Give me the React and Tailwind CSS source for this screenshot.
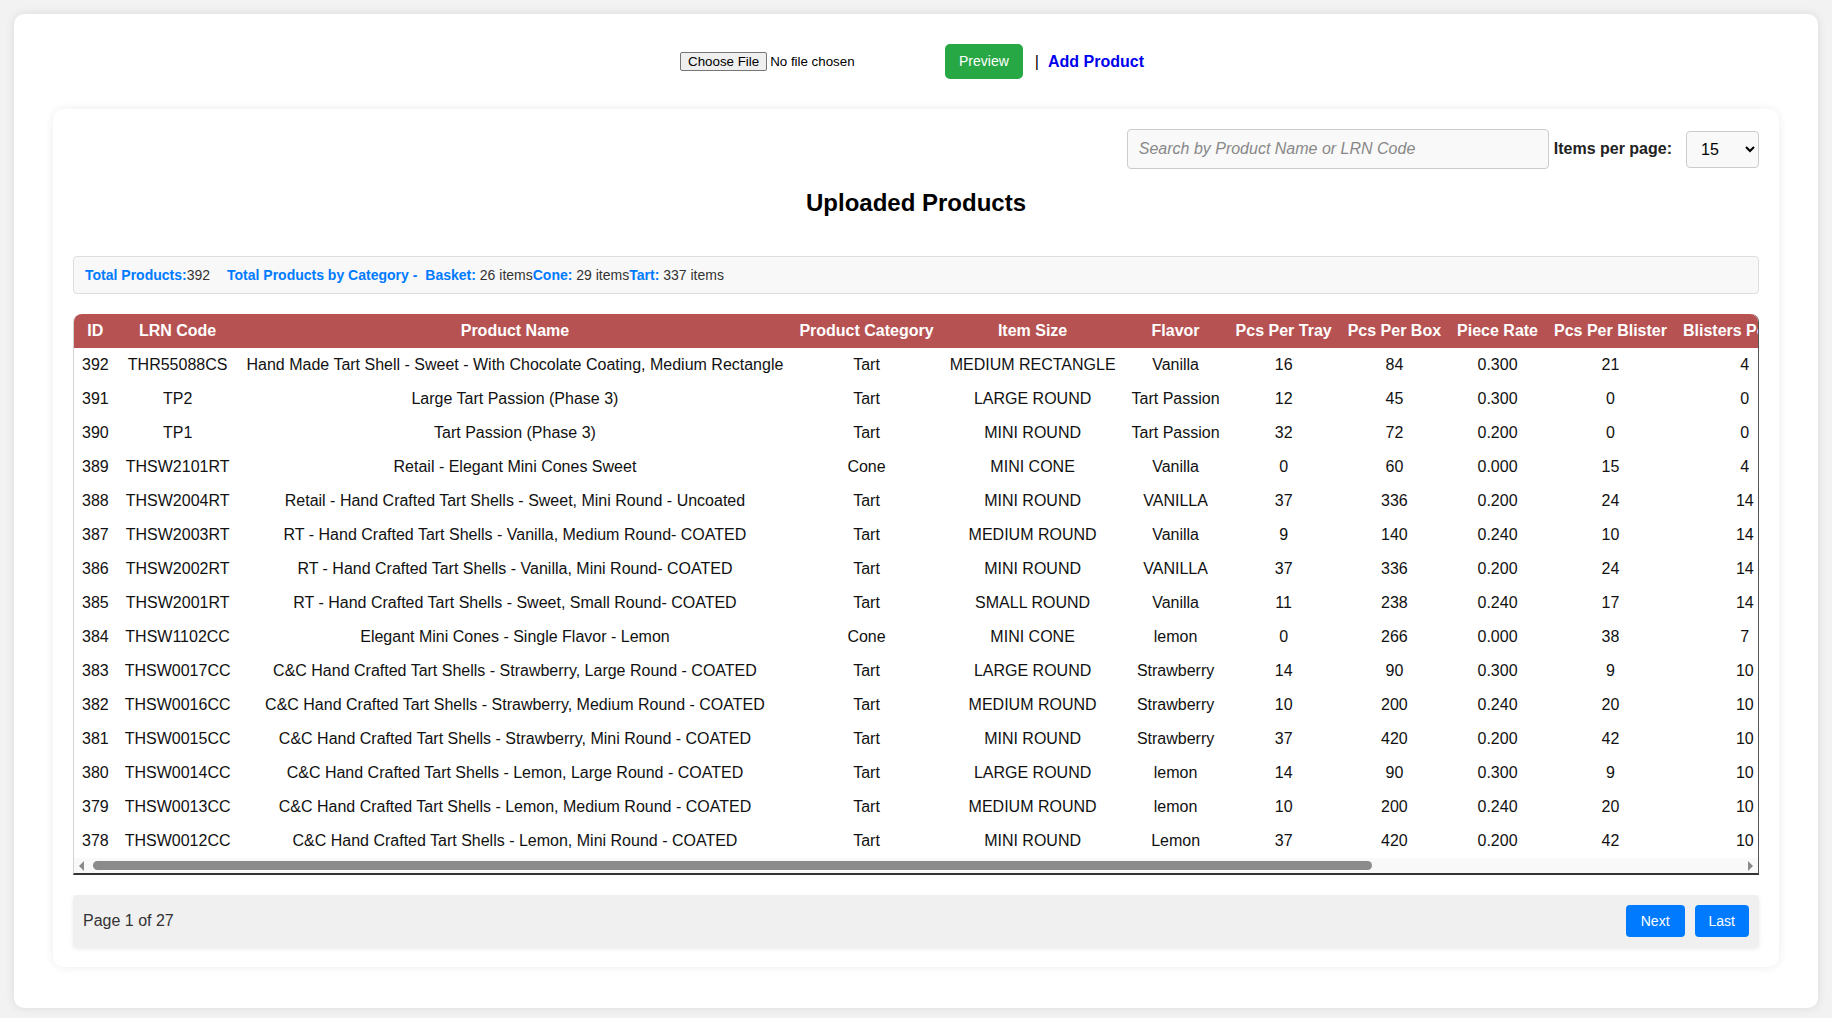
import React, { useState } from "react";

const products = [
  [392, "THR55088CS", "Hand Made Tart Shell - Sweet - With Chocolate Coating, Medium Rectangle", "Tart", "MEDIUM RECTANGLE", "Vanilla", 16, 84, "0.300", 21, 4],
  [391, "TP2", "Large Tart Passion (Phase 3)", "Tart", "LARGE ROUND", "Tart Passion", 12, 45, "0.300", 0, 0],
  [390, "TP1", "Tart Passion (Phase 3)", "Tart", "MINI ROUND", "Tart Passion", 32, 72, "0.200", 0, 0],
  [389, "THSW2101RT", "Retail - Elegant Mini Cones Sweet", "Cone", "MINI CONE", "Vanilla", 0, 60, "0.000", 15, 4],
  [388, "THSW2004RT", "Retail - Hand Crafted Tart Shells - Sweet, Mini Round - Uncoated", "Tart", "MINI ROUND", "VANILLA", 37, 336, "0.200", 24, 14],
  [387, "THSW2003RT", "RT - Hand Crafted Tart Shells - Vanilla, Medium Round- COATED", "Tart", "MEDIUM ROUND", "Vanilla", 9, 140, "0.240", 10, 14],
  [386, "THSW2002RT", "RT - Hand Crafted Tart Shells - Vanilla, Mini Round- COATED", "Tart", "MINI ROUND", "VANILLA", 37, 336, "0.200", 24, 14],
  [385, "THSW2001RT", "RT - Hand Crafted Tart Shells - Sweet, Small Round- COATED", "Tart", "SMALL ROUND", "Vanilla", 11, 238, "0.240", 17, 14],
  [384, "THSW1102CC", "Elegant Mini Cones - Single Flavor - Lemon", "Cone", "MINI CONE", "lemon", 0, 266, "0.000", 38, 7],
  [383, "THSW0017CC", "C&C Hand Crafted Tart Shells - Strawberry, Large Round - COATED", "Tart", "LARGE ROUND", "Strawberry", 14, 90, "0.300", 9, 10],
  [382, "THSW0016CC", "C&C Hand Crafted Tart Shells - Strawberry, Medium Round - COATED", "Tart", "MEDIUM ROUND", "Strawberry", 10, 200, "0.240", 20, 10],
  [381, "THSW0015CC", "C&C Hand Crafted Tart Shells - Strawberry, Mini Round - COATED", "Tart", "MINI ROUND", "Strawberry", 37, 420, "0.200", 42, 10],
  [380, "THSW0014CC", "C&C Hand Crafted Tart Shells - Lemon, Large Round - COATED", "Tart", "LARGE ROUND", "lemon", 14, 90, "0.300", 9, 10],
  [379, "THSW0013CC", "C&C Hand Crafted Tart Shells - Lemon, Medium Round - COATED", "Tart", "MEDIUM ROUND", "lemon", 10, 200, "0.240", 20, 10],
  [378, "THSW0012CC", "C&C Hand Crafted Tart Shells - Lemon, Mini Round - COATED", "Tart", "MINI ROUND", "Lemon", 37, 420, "0.200", 42, 10],
];

const headers = [
  "ID",
  "LRN Code",
  "Product Name",
  "Product Category",
  "Item Size",
  "Flavor",
  "Pcs Per Tray",
  "Pcs Per Box",
  "Piece Rate",
  "Pcs Per Blister",
  "Blisters Per Box",
  "Created At",
  "Pallet Qty",
  "Actions",
];

// fake horizontal scrollbar (the browser hides the real one)
function ScrollBar({ visible = 77 }) {
  return (
    <div className="h-[15px] flex items-center bg-[#f9f9f9]">
      <div className="w-[15px] flex justify-center">
        <div className="w-0 h-0 border-y-[5px] border-y-transparent border-r-[5px] border-r-[#8b8b8b]"></div>
      </div>
      <div className="flex-1 h-[9px] pl-[4px]">
        <div className="h-full rounded-full bg-[#8b8b8b]" style={{ width: `${visible}%` }}></div>
      </div>
      <div className="w-[15px] flex justify-center">
        <div className="w-0 h-0 border-y-[5px] border-y-transparent border-l-[5px] border-l-[#8b8b8b]"></div>
      </div>
    </div>
  );
}

export default function App() {
  const [search, setSearch] = useState("");
  const [perPage, setPerPage] = useState("15");

  return (
    <div className="min-h-screen bg-[#f2f2f2] p-[14px] font-['Liberation_Sans',Arial,sans-serif] text-black">
      <div className="bg-white rounded-[10px] shadow-[0_0_10px_rgba(0,0,0,0.1)] px-[39px] pt-[30px] pb-[41px]">
        {/* upload row */}
        <div className="flex items-center justify-center mb-[30px] pr-[8px]">
          <input
            type="file"
            className="w-[250px] text-[13.33px] leading-[15px] text-black file:mr-[3px] file:border file:border-[#767676] file:bg-[#efefef] file:rounded-[2px] file:px-[7px] file:py-[1px] file:text-black"
          />
          <button className="ml-[15px] h-[35px] px-[14px] rounded-[5px] bg-[#28a745] text-white text-[14px]">
            Preview
          </button>
          <span className="ml-[12px] text-[16px]">|</span>
          <a href="#" className="ml-[9px] text-[16px] font-bold text-[#0000ee]">
            Add Product
          </a>
        </div>

        {/* uploaded products card */}
        <div className="bg-white rounded-[10px] shadow-[0_0_10px_rgba(0,0,0,0.08)] p-[20px] pb-[20px]">
          <div className="flex items-center justify-end">
            <input
              type="text"
              value={search}
              onChange={(e) => setSearch(e.target.value)}
              placeholder="Search by Product Name or LRN Code"
              className="w-[422px] h-[40px] px-[11px] text-[16px] bg-[#f9f9f9] border border-[#ccc] rounded-[4px] placeholder:italic placeholder:text-[#888]"
            />
            <label className="ml-[5px] text-[16px] font-bold text-[#222]">Items per page:</label>
            <select
              value={perPage}
              onChange={(e) => setPerPage(e.target.value)}
              className="ml-[14px] w-[73px] h-[37px] px-[10px] text-[16px] bg-[#f9f9f9] border border-[#ccc] rounded-[4px]"
            >
              <option value="10">10</option>
              <option value="15">15</option>
              <option value="25">25</option>
              <option value="50">50</option>
            </select>
          </div>

          <h2 className="mt-[20px] mb-[39px] text-center text-[24px] leading-[28px] font-bold">
            Uploaded Products
          </h2>

          {/* totals */}
          <div className="bg-[#f8f8f8] border border-[#ddd] rounded-[4px] px-[11px] py-[10px] text-[14px] leading-[16px] text-[#333]">
            <span className="font-bold text-[#007bff]">Total Products:</span>392
            <span className="ml-[17px] font-bold text-[#007bff]">Total Products by Category -</span>
            <span className="ml-[8px] font-bold text-[#007bff]">Basket:</span> 26 items
            <span className="font-bold text-[#007bff]">Cone:</span> 29 items
            <span className="font-bold text-[#007bff]">Tart:</span> 337 items
          </div>

          {/* table */}
          <div className="mt-[20px] rounded-t-[8px] border-l border-l-[#d4d4d4] border-r border-r-[#555] border-b-2 border-b-[#333]">
            <div className="overflow-hidden rounded-t-[8px]">
              <table className="border-collapse text-[16px] leading-[18px] whitespace-nowrap">
                <thead>
                  <tr className="bg-[#b75252] text-white">
                    {headers.map((h) => (
                      <th key={h} className="px-2 py-2 font-bold text-center">
                        {h}
                      </th>
                    ))}
                  </tr>
                </thead>
                <tbody>
                  {products.map((p) => (
                    <tr key={p[0]} className="bg-white text-[#111]">
                      {p.map((v, i) => (
                        <td key={i} className="px-2 py-2 text-center">
                          {v}
                        </td>
                      ))}
                      <td className="px-2 py-2 text-center">2024-11-18 09:42:10</td>
                      <td className="px-2 py-2 text-center">48</td>
                      <td className="px-2 py-2 text-center min-w-[190px]">
                        <span className="text-[#007bff]">Edit</span>
                        <span className="ml-3 text-[#dc3545]">Delete</span>
                      </td>
                    </tr>
                  ))}
                </tbody>
              </table>
            </div>
            <ScrollBar visible={77.5} />
          </div>

          {/* pagination */}
          <div className="mt-[20px] flex items-center justify-between bg-[#f0f0f0] rounded-[4px] shadow-[0_2px_4px_rgba(0,0,0,0.08)] px-[10px] py-[10px]">
            <span className="text-[16px] text-[#333]">Page 1 of 27</span>
            <div className="flex gap-[10px]">
              <button className="h-[32px] px-[15px] rounded-[4px] bg-[#007bff] text-white text-[14px]">Next</button>
              <button className="h-[32px] px-[14px] rounded-[4px] bg-[#007bff] text-white text-[14px]">Last</button>
            </div>
          </div>
        </div>
      </div>
    </div>
  );
}
